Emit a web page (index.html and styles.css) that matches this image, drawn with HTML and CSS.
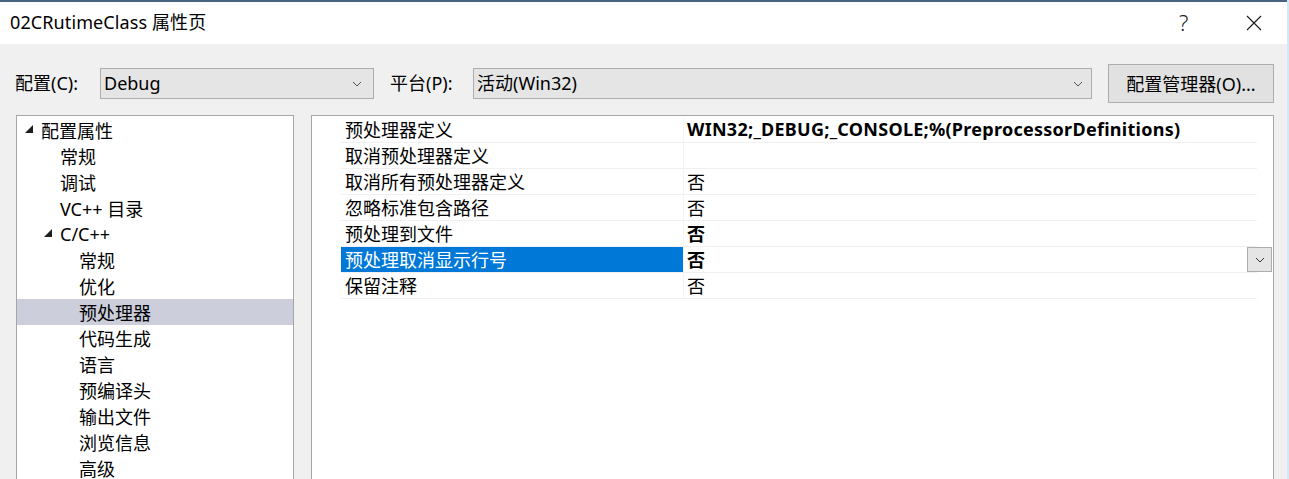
FILE: index.html
```html
<!DOCTYPE html>
<html lang="zh-CN">
<head>
<meta charset="utf-8">
<title>02CRutimeClass 属性页</title>
<link rel="stylesheet" href="styles.css">
</head>
<body>
<div class="window">
  <div class="titlebar">
    <span class="title">02CRutimeClass 属性页</span>
    <span class="help">?</span>
    <span class="close">
      <svg width="16" height="16" viewBox="0 0 16 16"><path d="M1 1 L15 15 M15 1 L1 15" stroke="#1a1a1a" stroke-width="1.1" fill="none"/></svg>
    </span>
  </div>
  <div class="content">
    <div class="config-row">
      <span class="lbl lbl-config">配置(C):</span>
      <div class="select sel-config">
        <span class="sel-text">Debug</span>
        <svg class="chev" width="10" height="6" viewBox="0 0 10 6"><path d="M1 1 L5 5 L9 1" stroke="#555" stroke-width="1" fill="none"/></svg>
      </div>
      <span class="lbl lbl-platform">平台(P):</span>
      <div class="select sel-platform">
        <span class="sel-text">活动(Win32)</span>
        <svg class="chev" width="10" height="6" viewBox="0 0 10 6"><path d="M1 1 L5 5 L9 1" stroke="#555" stroke-width="1" fill="none"/></svg>
      </div>
      <div class="btn">配置管理器(O)...</div>
    </div>
    <div class="panes">
      <div class="tree">
        <div class="node lvl0"><span class="tri"><svg width="8" height="8" viewBox="0 0 8 8"><path d="M8 0 L8 8 L0 8 Z" fill="#1e1e1e"/></svg></span>配置属性</div>
        <div class="node lvl1">常规</div>
        <div class="node lvl1">调试</div>
        <div class="node lvl1">VC++ 目录</div>
        <div class="node lvl1"><span class="tri"><svg width="8" height="8" viewBox="0 0 8 8"><path d="M8 0 L8 8 L0 8 Z" fill="#1e1e1e"/></svg></span>C/C++</div>
        <div class="node lvl2">常规</div>
        <div class="node lvl2">优化</div>
        <div class="node lvl2 selected">预处理器</div>
        <div class="node lvl2">代码生成</div>
        <div class="node lvl2">语言</div>
        <div class="node lvl2">预编译头</div>
        <div class="node lvl2">输出文件</div>
        <div class="node lvl2">浏览信息</div>
        <div class="node lvl2">高级</div>
      </div>
      <div class="grid">
        <div class="rows">
          <div class="row"><span class="name">预处理器定义</span><span class="value bold wide">WIN32;_DEBUG;_CONSOLE;%(PreprocessorDefinitions)</span></div>
          <div class="row"><span class="name">取消预处理器定义</span><span class="value"></span></div>
          <div class="row"><span class="name">取消所有预处理器定义</span><span class="value">否</span></div>
          <div class="row"><span class="name">忽略标准包含路径</span><span class="value">否</span></div>
          <div class="row"><span class="name">预处理到文件</span><span class="value bold">否</span></div>
          <div class="row active"><span class="name">预处理取消显示行号</span><span class="value bold">否</span>
            <span class="dd"><svg width="10" height="6" viewBox="0 0 10 6"><path d="M1 1 L5 5 L9 1" stroke="#333" stroke-width="1" fill="none"/></svg></span>
          </div>
          <div class="row"><span class="name">保留注释</span><span class="value">否</span></div>
        </div>
      </div>
    </div>
  </div>
</div>
</body>
</html>
```
FILE: styles.css
```css
* { box-sizing: border-box; }
html, body {
  margin: 0;
  padding: 0;
  width: 1289px;
  height: 479px;
  overflow: hidden;
}
body {
  font-family: "Noto Sans", "Noto Sans CJK SC", sans-serif;
  font-size: 18px;
  color: #000;
  background: #f0f0f0;
}
.window {
  width: 1289px;
  height: 479px;
  display: flex;
  flex-direction: column;
  overflow: hidden;
  border-right: 2px solid #cfeaf8;
  background: #f0f0f0;
}
.titlebar {
  height: 44px;
  flex: none;
  display: flex;
  align-items: center;
  background: #fff;
  border-top: 2px solid #4a6381;
  padding-left: 10px;
}
.title {
  flex: 1;
  line-height: 1;
  padding-bottom: 2px;
  letter-spacing: 0.1px;
}
.help {
  width: 20px;
  font-size: 22px;
  font-weight: 300;
  color: #222;
  margin-right: 47px;
  line-height: 1;
  padding-bottom: 2px;
}
.close {
  width: 16px;
  height: 16px;
  margin-right: 25px;
  display: flex;
}
.content {
  flex: 1;
  display: flex;
  flex-direction: column;
  padding-top: 20px;
  min-height: 0;
}
.config-row {
  display: flex;
  align-items: center;
  height: 39px;
  flex: none;
  padding-left: 15px;
}
.lbl {
  line-height: 1;
  padding-bottom: 2px;
}
.lbl-config { width: 85px; }
.lbl-platform { width: 83px; margin-left: 16px; }
.select {
  height: 31px;
  background: #e5e5e5;
  border: 1px solid #adadad;
  display: flex;
  align-items: center;
  padding-left: 3px;
}
.sel-text {
  flex: 1;
  line-height: 1;
  padding-bottom: 2px;
}
.chev { margin-right: 11px; }
.sel-config { width: 274px; }
.sel-platform { width: 619px; }
.sel-platform .chev { margin-right: 8px; }
.btn {
  width: 166px;
  height: 39px;
  margin-left: 16px;
  background: #e1e1e1;
  border: 1px solid #adadad;
  display: flex;
  align-items: center;
  justify-content: center;
  padding-bottom: 2px;
}
.panes {
  flex: 1;
  min-height: 0;
  overflow: hidden;
  display: flex;
  align-items: flex-start;
  margin-top: 12px;
  padding-left: 16px;
  gap: 17px;
}
.tree {
  width: 278px;
  height: 380px;
  flex: none;
  background: #fff;
  border: 1px solid #a6a6a6;
  padding-top: 1px;
}
.node {
  height: 26px;
  display: flex;
  align-items: center;
  white-space: nowrap;
  padding-bottom: 1px;
}
.node.lvl0 { padding-left: 24px; }
.node.lvl1 { padding-left: 43px; }
.node.lvl2 { padding-left: 62px; }
.tri {
  width: 0;
  position: relative;
  height: 26px;
}
.tri svg {
  position: absolute;
  left: -16px;
  top: 8px;
}
.node.selected { background: #cccedb; }
.grid {
  width: 963px;
  height: 380px;
  flex: none;
  background: #fff;
  border: 1px solid #a6a6a6;
  padding-top: 1px;
  padding-left: 29px;
}
.rows {
  width: 916px;
}
.row {
  height: 26px;
  display: flex;
  position: relative;
  border-bottom: 1px solid #f0f0f0;
}
.name {
  width: 343px;
  flex: none;
  padding-left: 4px;
  display: flex;
  align-items: center;
  white-space: nowrap;
  border-right: 1px solid #f4f4f4;
  padding-bottom: 1px;
}
.value {
  flex: 1;
  padding-left: 3px;
  display: flex;
  align-items: center;
  white-space: nowrap;
  padding-bottom: 1px;
}
.bold { font-weight: 700; }
.wide { letter-spacing: 0.27px; }
.row.active .name {
  background: #0078d7;
  color: #fff;
}
.dd {
  position: absolute;
  right: -15px;
  top: 0;
  width: 25px;
  height: 25px;
  background: #e5e5e5;
  border: 1px solid #adadad;
  display: flex;
  align-items: center;
  justify-content: center;
}
```
